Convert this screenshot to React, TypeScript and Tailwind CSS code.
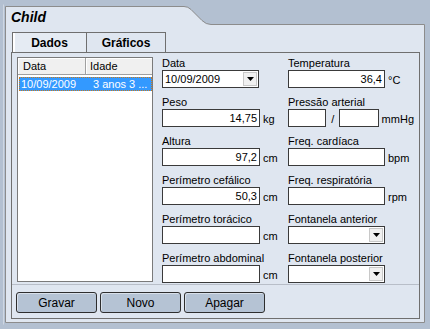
import React from "react";

const Arrow = () => (
  <div className="w-[14px] h-[14px] mr-[1px] bg-[#f0f0f0] border border-[#c8c8c8] flex items-center justify-center">
    <svg width="7" height="4" viewBox="0 0 7 4">
      <path d="M0 0H7L3.5 4Z" fill="#000" />
    </svg>
  </div>
);

const Label = ({ children }: { children: React.ReactNode }) => (
  <div className="h-[13px] leading-[13px] text-[11px] text-black whitespace-nowrap">{children}</div>
);

const Input = ({ w, value }: { w: string; value?: string }) => (
  <div className={`${w} h-[18px] border border-[#3a3a3a] bg-white text-right pr-[2px] text-[11px] leading-[16px]`}>
    {value}
  </div>
);

const Field = ({
  label,
  value,
  unit,
  w = "w-[98px]",
}: {
  label: string;
  value?: string;
  unit?: string;
  w?: string;
}) => (
  <div className="mb-[8px]">
    <Label>{label}</Label>
    <div className="flex items-center h-[18px]">
      <Input w={w} value={value} />
      {unit && <span className="ml-[3px] text-[11px] leading-[13px] mt-[3px]">{unit}</span>}
    </div>
  </div>
);

const Select = ({ label, value, w }: { label: string; value?: string; w: string }) => (
  <div className="mb-[8px]">
    <Label>{label}</Label>
    <div className={`${w} h-[18px] border border-[#3a3a3a] bg-white flex items-center justify-between`}>
      <span className="pl-[2px] text-[11px] leading-[16px]">{value}</span>
      <Arrow />
    </div>
  </div>
);

export default function App() {
  return (
    <div className="relative w-[430px] h-[329px] bg-[#b3c0d1] overflow-hidden text-black" style={{ fontFamily: '"Liberation Sans", Arial, sans-serif' }}>
      <svg className="absolute inset-0" width="430" height="329" viewBox="0 0 430 329">
        <path
          d="M3.5 324.5V4.5"
          stroke="#cfd7e2"
          fill="none"
        />
        <path
          d="M5.5 6.5H184Q188 6.5 191 9.5L202 20.5Q206 24.5 211 24.5H424.5V322.5H5.5Z"
          fill="#dfe6f0"
          stroke="#8c8c8c"
        />
      </svg>
      <div className="relative pl-[11px] pt-[9px]">
        <div className="h-[16px] leading-[16px] text-[14px] font-bold italic">Child</div>
        <div className="mt-[7px] flex h-[20px] ml-[1px]">
          <div className="w-[75px] h-[20px] border-t border-l border-r border-[#6f6f6f] bg-[#e5ebf3] shadow-[inset_2px_0_0_#ffffff] flex items-center justify-center text-[12px] font-bold">
            Dados
          </div>
          <div className="w-[79px] h-[20px] border-t border-r border-[#6f6f6f] bg-[#dfe6f0] flex items-center justify-center text-[12px] font-bold">
            Gráficos
          </div>
        </div>
        <div className="w-[409px] h-[267px] border border-[#6f6f6f] flex flex-col">
          <div className="h-[232px] flex pt-[4px] pl-[5px] border-b border-[#b8bec8]">
            <div className="w-[136px] h-[225px] border border-[#7a7a7a] bg-white flex flex-col">
              <div className="flex h-[17px] border-b border-[#a0a0a0] bg-[#f0f0f0] text-[11px] leading-[16px]">
                <div className="w-[68px] pl-[5px] border-r border-[#a0a0a0] shadow-[inset_1px_1px_0_#ffffff]">Data</div>
                <div className="flex-1 pl-[4px] shadow-[inset_1px_1px_0_#ffffff]">Idade</div>
              </div>
              <div className="mt-[2px] ml-[1px] h-[14px] bg-[#3399ff] outline-1 outline-dotted outline-[#c87a1e] -outline-offset-1 flex text-white text-[11px] leading-[14px] whitespace-nowrap overflow-hidden">
                <span className="w-[74px] pl-[2px]">10/09/2009</span>
                <span>3 anos 3 ...</span>
              </div>
            </div>
            <div className="ml-[9px] flex">
              <div className="w-[126px]">
                <Select label="Data" value="10/09/2009" w="w-[97px]" />
                <Field label="Peso" value="14,75" unit="kg" />
                <Field label="Altura" value="97,2" unit="cm" />
                <Field label="Perímetro cefálico" value="50,3" unit="cm" />
                <Field label="Perímetro torácico" unit="cm" />
                <Field label="Perímetro abdominal" unit="cm" />
              </div>
              <div className="w-[126px]">
                <Field label="Temperatura" value="36,4" unit="°C" w="w-[97px]" />
                <div className="mb-[8px]">
                  <Label>Pressão arterial</Label>
                  <div className="flex items-center h-[18px]">
                    <Input w="w-[41px]" />
                    <span className="w-[14px] text-center text-[11px] leading-[13px] mt-[2px]">/</span>
                    <Input w="w-[42px]" />
                    <span className="ml-[3px] text-[11px] leading-[13px] mt-[3px]">mmHg</span>
                  </div>
                </div>
                <Field label="Freq. cardíaca" unit="bpm" w="w-[97px]" />
                <Field label="Freq. respiratória" unit="rpm" w="w-[97px]" />
                <Select label="Fontanela anterior" w="w-[97px]" />
                <Select label="Fontanela posterior" w="w-[97px]" />
              </div>
            </div>
          </div>
          <div className="flex gap-[3px] pl-[4px] pt-[7px]">
            {["Gravar", "Novo", "Apagar"].map((b) => (
              <div
                key={b}
                className="w-[81px] h-[21px] rounded-[3px] border border-[#2e2e2e] bg-[#b5c3d4] shadow-[inset_1px_1px_0_#d8e0ea] flex items-center justify-center text-[12px]"
              >
                {b}
              </div>
            ))}
          </div>
        </div>
      </div>
    </div>
  );
}
